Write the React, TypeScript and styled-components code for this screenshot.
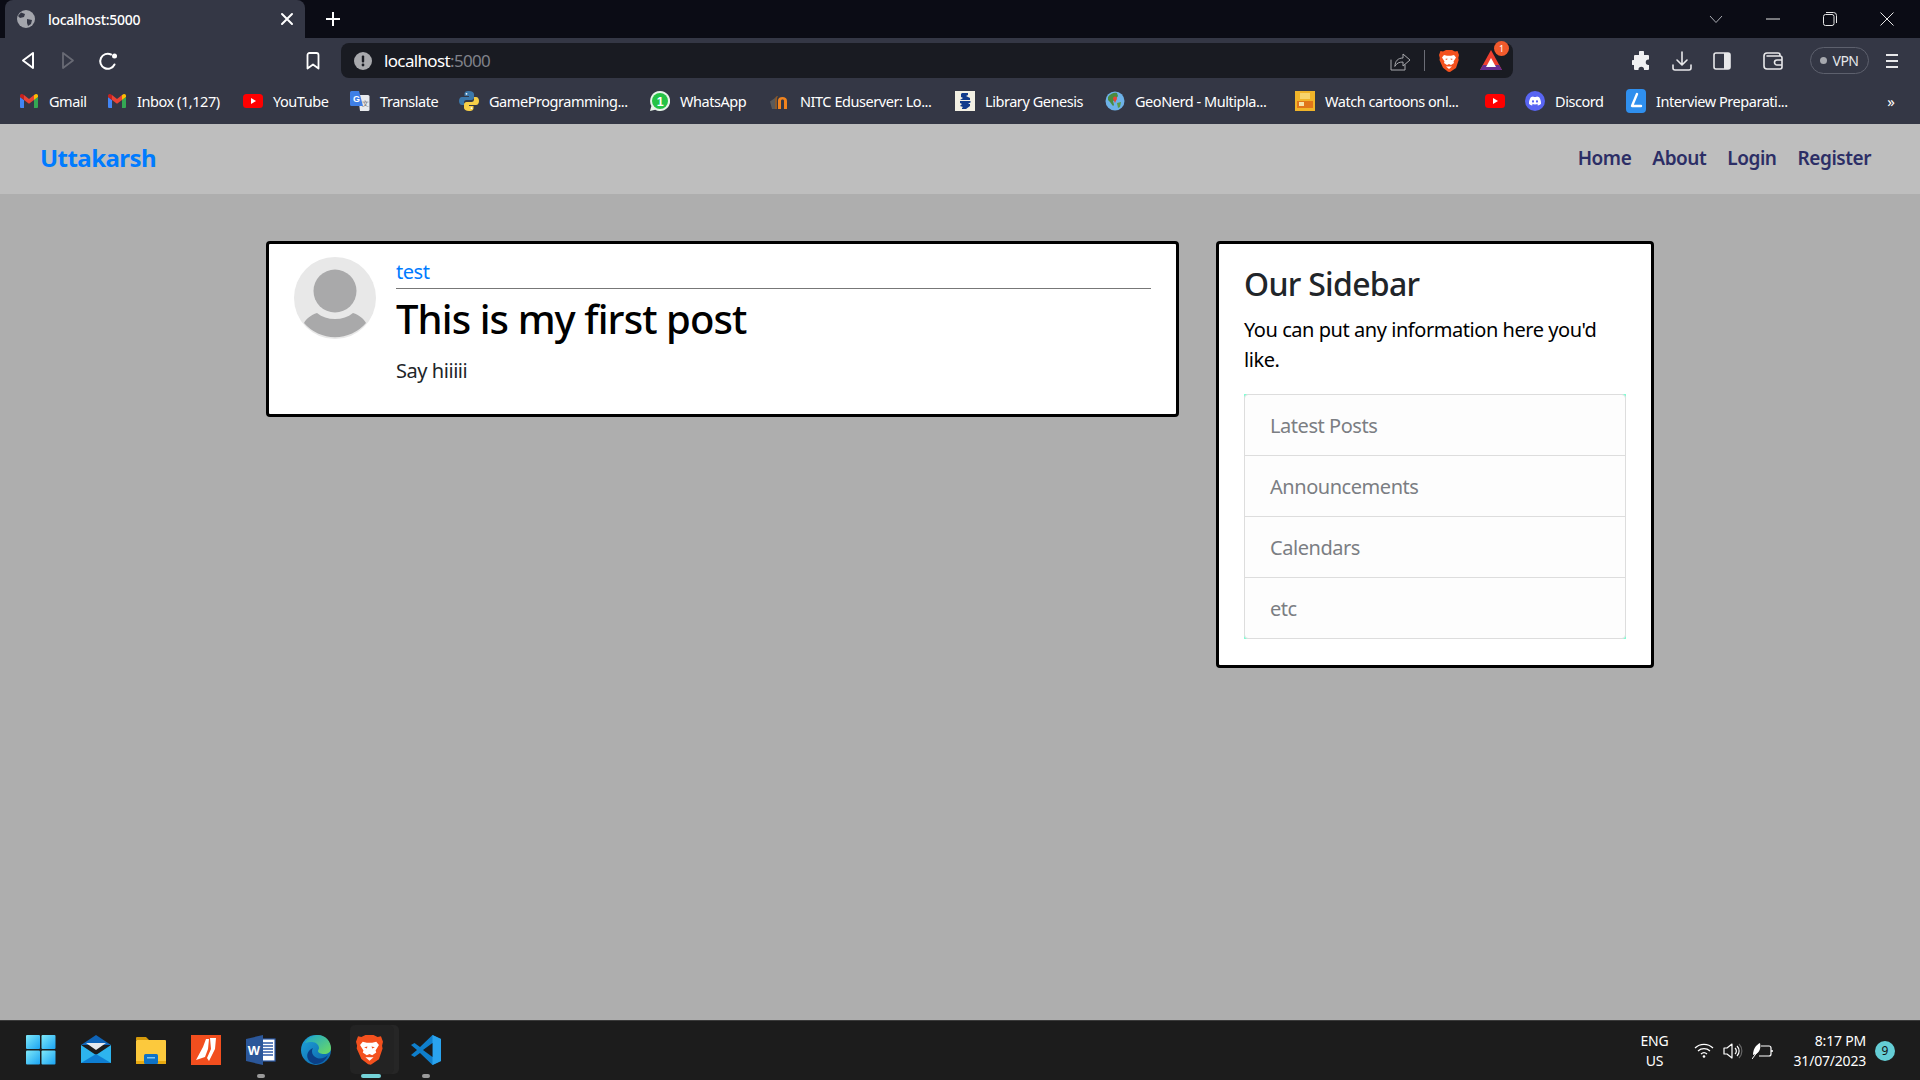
import React from "react";
import styled, { createGlobalStyle } from "styled-components";
import { SiBrave, SiDiscord, SiWhatsapp, SiPython } from "react-icons/si";

const Global = createGlobalStyle`
  html, body { margin: 0; padding: 0; height: 100%; overflow: hidden; }
  body { font-family: "Noto Sans", "Open Sans", sans-serif; background: #aeaeae; }
  * { box-sizing: border-box; }
  svg { display: block; }
`;

const Screen = styled.div`width: 1920px; height: 1080px; display: flex; flex-direction: column; background: #aeaeae;`;

const TabStrip = styled.div`height: 38px; background: #0b0c15; display: flex; align-items: flex-end; padding-left: 5px;`;
const Tab = styled.div`width: 300px; height: 38px; background: #343745; border-radius: 8px 8px 0 0; display: flex; align-items: center; padding: 0 8px 0 12px; color: #fff;`;
const TabTitle = styled.span`flex: 1; margin-left: 13px; font-size: 14px; font-weight: 500; letter-spacing: -0.3px;`;
const NewTab = styled.div`width: 24px; height: 38px; margin-left: 16px; display: flex; align-items: center; justify-content: center;`;
const WindowControls = styled.div`margin-left: auto; height: 38px; display: flex; align-items: center; padding-right: 5px;`;
const WinButton = styled.div`width: 57px; display: flex; justify-content: center;`;

const Toolbar = styled.div`height: 40px; background: #343745; display: grid; grid-template-columns: 341px 1172px 1fr;`;
const NavCluster = styled.div`display: flex; align-items: center; padding: 5px 0 0 8px; height: 40px;`;
const ToolCell = styled.div<{ $w?: number; $ml?: number }>`
  width: ${p => p.$w ?? 40}px; margin-left: ${p => p.$ml ?? 0}px; flex: none;
  display: flex; align-items: center; justify-content: center;
`;
const AddressBar = styled.div`margin-top: 5px; height: 35px; background: #191b22; border-radius: 8px; display: flex; align-items: center; padding: 0 11px 0 12px;`;
const UrlText = styled.span`flex: 1; margin-left: 11px; color: #fff; font-size: 17px; letter-spacing: -0.65px;`;
const UrlPort = styled.span`color: #80828a;`;
const Separator = styled.div`width: 1px; height: 21px; background: #6b6d76; margin: 0 14px;`;
const ExtSlot = styled.div`margin-left: 21px; width: 22px; position: relative;`;
const ExtBadge = styled.span`
  position: absolute; top: -9px; right: -7px; width: 15px; height: 15px; border-radius: 50%;
  background: #f25a2c; color: #fff; font-size: 9px; display: flex; align-items: center; justify-content: center;
`;
const RightCluster = styled.div`display: flex; align-items: center; padding: 5px 0 0 109px; height: 40px;`;
const VpnPill = styled.div`
  margin-left: 17px; width: 59px; height: 27px; border: 1px solid #5d606d; border-radius: 14px; flex: none;
  display: flex; align-items: center; justify-content: center; gap: 5px; color: #e6e7ea; font-size: 14px; letter-spacing: -0.5px;
`;
const VpnDot = styled.span`width: 7px; height: 7px; border-radius: 50%; background: #a6a8ae;`;

const BookmarkBar = styled.div`height: 46px; background: #343745; display: flex; align-items: center; padding-left: 19px;`;
const Bookmark = styled.div<{ $w: number }>`
  width: ${p => p.$w}px; flex: none; display: flex; align-items: center; gap: 10px; color: #fff;
  font-size: 14.5px; letter-spacing: -0.45px; white-space: nowrap;
`;
const BookmarkIcon = styled.span`width: 20px; height: 20px; flex: none; display: flex; align-items: center; justify-content: center;`;
const MoreChevron = styled.span`margin-left: auto; margin-right: 25px; color: #fff; font-size: 15px;`;

const NavBar = styled.nav`height: 70px; background: #bebebe; display: flex; align-items: center; justify-content: space-between; padding: 0 49px 3px 40px;`;
const Brand = styled.a`color: #007bff; font-size: 24px; font-weight: 700; letter-spacing: -0.55px;`;
const NavLinks = styled.div`display: flex; gap: 21px;`;
const NavLink = styled.a`color: #2c2e66; font-size: 19px; font-weight: 600; letter-spacing: -0.45px;`;

const Main = styled.main`flex: 1; display: flex; justify-content: center; align-items: flex-start; gap: 37px; padding-top: 47px;`;
const Panel = styled.section`background: #fff; border: 3px solid #000; border-radius: 4px;`;
const PostCard = styled(Panel)`width: 913px; height: 176px; display: flex; padding: 13px 25px; gap: 20px;`;
const Avatar = styled.div`width: 82px; height: 82px; flex: none;`;
const PostBody = styled.div`flex: 1;`;
const Author = styled.a`display: block; color: #007bff; font-size: 20px; line-height: 30px; height: 32px; letter-spacing: -0.45px; border-bottom: 1px solid #777;`;
const PostTitle = styled.h2`margin: 0; font-size: 40px; line-height: 60px; font-weight: 500; color: #000; letter-spacing: -0.9px;`;
const PostText = styled.p`margin: 7px 0 0; font-size: 20px; line-height: 30px; color: #212529; letter-spacing: -0.45px;`;

const SideCard = styled(Panel)`width: 438px; height: 427px; padding: 16px 25px;`;
const SideTitle = styled.h3`margin: 0; font-size: 32px; line-height: 48px; font-weight: 500; color: #212529; letter-spacing: -0.7px;`;
const SideText = styled.p`margin: 7px 0 0; font-size: 20px; line-height: 30px; color: #000; letter-spacing: -0.45px;`;
const ListOuter = styled.div`margin-top: 19px; background: #7fffd4;`;
const List = styled.ul`list-style: none; margin: 0; padding: 0; border: 1px solid #ddd; border-radius: 4px; background: #fdfdfd; overflow: hidden;`;
const ListItem = styled.li`
  height: 61px; padding-left: 25px; display: flex; align-items: center; color: #7b7e83; font-size: 20px; letter-spacing: -0.45px;
  border-bottom: 1px solid #ddd;
  &:last-child { border-bottom: 0; height: 60px; }
`;

const Taskbar = styled.footer`height: 60px; background: #1c1c1c; border-top: 1px solid #3a3a3a; display: flex; align-items: center; justify-content: space-between; padding: 0 25px 0 13px;`;
const TaskIcons = styled.div`display: flex;`;
const TaskCell = styled.div`width: 55px; height: 59px; position: relative; display: flex; align-items: center; justify-content: center;`;
const ActiveBack = styled.span`position: absolute; left: 7px; top: 4px; width: 44px; height: 49px; background: #232323; border-radius: 5px; box-shadow: 5px 0 0 #262626;`;
const IconWrap = styled.span`position: relative; width: 30px; height: 30px; margin-top: -1px;`;
const RunDot = styled.span<{ $on?: boolean }>`
  position: absolute; bottom: 2px; left: 50%; height: 4px; border-radius: 2px; transform: translateX(-50%);
  width: ${p => (p.$on ? 20 : 8)}px; background: ${p => (p.$on ? "#74d3d8" : "#9a9a9a")};
`;
const Tray = styled.div`display: flex; align-items: center; color: #fff;`;
const Lang = styled.div`text-align: center; font-size: 14px; line-height: 20px; letter-spacing: -0.2px; width: 32px;`;
const TrayIcons = styled.div`display: flex; align-items: center; gap: 9px; margin-left: 23px;`;
const Clock = styled.div`margin-left: 21px; text-align: right; font-size: 14px; line-height: 20px; letter-spacing: -0.2px;`;
const NotifBadge = styled.span`margin-left: 9px; width: 20px; height: 20px; border-radius: 50%; background: #64cdd5; color: #111; font-size: 12px; display: flex; align-items: center; justify-content: center;`;

const stroke = { fill: "none", stroke: "#fff", strokeWidth: 1.6, strokeLinecap: "round" as const, strokeLinejoin: "round" as const };

const GmailIcon = () => (
  <svg width="18" height="14" viewBox="0 0 18 14">
    <path d="M0 3v10a1 1 0 0 0 1 1h3V6z" fill="#4285f4" />
    <path d="M14 6v8h3a1 1 0 0 0 1-1V3z" fill="#34a853" />
    <path d="M4 6 9 9.8 14 6V1L9 5 4 1z" fill="#ea4335" />
    <path d="M0 3 4 6V1L2.6.2C1.4-.4 0 .4 0 1.8z" fill="#c5221f" />
    <path d="M18 3 14 6V1l1.4-.8C16.6-.4 18 .4 18 1.8z" fill="#fbbc04" />
  </svg>
);
const YouTubeIcon = () => (
  <svg width="20" height="14" viewBox="0 0 20 14">
    <rect width="20" height="14" rx="3.5" fill="#f00" />
    <path d="M8 4l5 3-5 3z" fill="#fff" />
  </svg>
);
const TranslateIcon = () => (
  <svg width="20" height="20" viewBox="0 0 20 20">
    <path d="M8 4h10a1.5 1.5 0 0 1 1.5 1.5V18.500a1.500 1.500 0 0 1-1.500 1.500H10z" fill="#e8eaed" />
    <path d="M1.500 0H9l4 15H1.500A1.500 1.500 0 0 1 0 13.500V1.500A1.500 1.500 0 0 1 1.500 0z" fill="#3f7fe6" />
    <text x="3" y="11" fontSize="9" fontWeight="700" fill="#fff" fontFamily="Liberation Sans">G</text>
    <text x="12" y="15" fontSize="7" fill="#666" fontFamily="Noto Sans">文</text>
  </svg>
);
const PythonIcon = () => (
  <svg width="20" height="20" viewBox="0 0 20 20">
    <path d="M10 0C6 0 5.500 1.600 5.500 3v2H10v1H3C1 6 0 7.800 0 10s1 4 3 4h2v-2.500C5 9.800 6.200 9 7.500 9h5c1.300 0 2.500-1 2.500-2.500V3c0-1.500-1.800-3-5-3z" fill="#3c78aa" />
    <path d="M10 20c4 0 4.500-1.600 4.500-3v-2H10v-1h7c2 0 3-1.800 3-4s-1-4-3-4h-2v2.500c0 1.700-1.200 2.500-2.500 2.500h-5C6.200 11 5 12 5 13.500V17c0 1.500 1.800 3 5 3z" fill="#f7cf47" />
    <circle cx="7.500" cy="2.800" r=".9" fill="#fff" />
    <circle cx="12.500" cy="17.200" r=".9" fill="#fff" />
  </svg>
);
const WhatsAppIcon = () => (
  <svg width="20" height="20" viewBox="0 0 20 20">
    <path d="M10 0a10 10 0 0 0-8.600 15L0 20l5.200-1.300A10 10 0 1 0 10 0z" fill="#e8f4ea" />
    <circle cx="10" cy="10" r="8" fill="#25c346" />
    <text x="10" y="14.500" fontSize="12.500" fontWeight="700" fill="#fff" textAnchor="middle" fontFamily="Liberation Sans">1</text>
  </svg>
);
const MoodleIcon = () => (
  <svg width="20" height="16" viewBox="0 0 20 16">
    <path d="M0 8.500 5 5v11H2z" fill="#5a5a5a" />
    <path d="M5 16V7c0-3 1-4 3-4l-1 2v11z" fill="#8a5a2c" />
    <path d="M8 16V7.500C8 5 10 4 12.500 4S17 5 17 8v8h-3V8c0-1-.5-1.500-1.500-1.500S11 7 11 8v8z" fill="#f0831e" />
  </svg>
);
const LibGenIcon = () => (
  <svg width="20" height="20" viewBox="0 0 20 20">
    <rect width="20" height="20" fill="#f2efe3" />
    <path d="M7 2h6v2l-2 1 4 2v2H5l3-2-2-1V3zM5 10h10l1 1-3 2h2v2l-4 3H7v-1l1-1-3-1 2-2-2-1z" fill="#123c8c" />
  </svg>
);
const GeoIcon = () => (
  <svg width="20" height="20" viewBox="0 0 20 20">
    <circle cx="10" cy="10" r="9.500" fill="#6db2e8" />
    <path d="M3 6c2-3 6-5 9-4l1 3-3 4-2 1 1 4-1 1-3-4-2-2z" fill="#4b8b3f" />
    <path d="M12 12l4-1-1 5-2 1z" fill="#5c9a49" />
    <circle cx="10" cy="7.500" r="2" fill="#ea4335" />
    <path d="M8.500 8.500 10 12l1.500-3.500z" fill="#ea4335" />
  </svg>
);
const CartoonIcon = () => (
  <svg width="20" height="20" viewBox="0 0 20 20">
    <rect width="20" height="20" fill="#f0b429" />
    <rect x="2" y="10" width="16" height="7" fill="#e0761a" />
    <rect x="5" y="2" width="10" height="6" fill="#f7d46c" />
    <rect x="4" y="11" width="5" height="4" fill="#f6e3a8" />
  </svg>
);
const DiscordIcon = () => (
  <svg width="20" height="20" viewBox="0 0 20 20">
    <circle cx="10" cy="10" r="10" fill="#5865f2" />
    <g transform="translate(4 4) scale(.5)"><SiDiscord size={24} color="#fff" /></g>
  </svg>
);
const LeetIcon = () => (
  <svg width="20" height="24" viewBox="0 0 20 24">
    <rect width="20" height="24" rx="4" fill="#2f8fee" />
    <path d="M11 5 6 17h9" fill="none" stroke="#fff" strokeWidth="2.400" strokeLinecap="round" strokeLinejoin="round" />
  </svg>
);

const BraveLogo = ({ size }: { size: number }) => (
  <svg width={size} height={size * 1.1} viewBox="0 0 20 22">
    <path d="M4 1.500 7 0h6l3 1.500L18.500 1 20 5l-.7 3 .4 2-2.700 8-6 4-2-.3-5-4L.5 10l.3-2L0 5l1.500-4z" fill="#f4511e" />
    <path d="M5 5l3 .8h4L15 5l2 2.500-2.500 4 .5 1.500-3 2-2-1-2 1-3-2 .5-1.500L3 7.500z" fill="#fff" />
    <path d="M7 16.500h6L10 19z" fill="#fff" />
    <path d="M8 10 6 9l2.500-.5zM12 10l2-1-2.500-.5z" fill="#f4511e" />
  </svg>
);

const Avatar0 = () => (
  <svg width="82" height="82" viewBox="0 0 82 82">
    <circle cx="41" cy="41" r="41" fill="#e8e8e8" />
    <circle cx="41" cy="34" r="21.500" fill="#a9a9aa" />
    <path d="M10 66c2-4 7-8 13-10 5 4 11 6 18 6s13-2 18-6c6 2 11 6 13 10a41 41 0 0 1-62 0z" fill="#a9a9aa" />
  </svg>
);

const bookmarks: [number, React.ReactNode, string][] = [
  [88, <GmailIcon />, "Gmail"],
  [136, <GmailIcon />, "Inbox (1,127)"],
  [107, <YouTubeIcon />, "YouTube"],
  [109, <TranslateIcon />, "Translate"],
  [191, <PythonIcon />, "GameProgramming..."],
  [120, <WhatsAppIcon />, "WhatsApp"],
  [185, <MoodleIcon />, "NITC Eduserver: Lo..."],
  [150, <LibGenIcon />, "Library Genesis"],
  [190, <GeoIcon />, "GeoNerd - Multipla..."],
  [190, <CartoonIcon />, "Watch cartoons onl..."],
  [40, <YouTubeIcon />, ""],
  [101, <DiscordIcon />, "Discord"],
  [190, <LeetIcon />, "Interview Preparati..."],
];

const WindowsLogo = () => (
  <svg width="30" height="30" viewBox="0 0 30 30">
    <defs>
      <linearGradient id="winA" x1="0" y1="0" x2="1" y2="1"><stop offset="0" stopColor="#7fe9f9" /><stop offset="1" stopColor="#1aa3f3" /></linearGradient>
    </defs>
    <rect x="0" y="0" width="14" height="14" rx="1" fill="url(#winA)" />
    <rect x="15.500" y="0" width="14" height="14" rx="1" fill="url(#winA)" />
    <rect x="0" y="15.500" width="14" height="14" rx="1" fill="url(#winA)" />
    <rect x="15.500" y="15.500" width="14" height="14" rx="1" fill="url(#winA)" />
  </svg>
);
const MailLogo = () => (
  <svg width="30" height="30" viewBox="0 0 30 30">
    <path d="M15 0 30 10H0z" fill="#0f64b8" />
    <path d="M5 8h20l-10 7z" fill="#e6e9ee" />
    <path d="M0 10l15 10 15-10v18H0z" fill="#2db4ee" />
    <path d="M0 28 15 19l15 9z" fill="#0e7ed2" />
  </svg>
);
const FolderLogo = () => (
  <svg width="30" height="30" viewBox="0 0 30 30">
    <path d="M0 3a1 1 0 0 1 1-1h9l3 3H0z" fill="#d59a0b" />
    <rect x="0" y="5" width="30" height="24" rx="1" fill="#fcc93d" />
    <path d="M0 26h30v2a1 1 0 0 1-1 1H1a1 1 0 0 1-1-1z" fill="#e8a90f" />
    <rect x="8" y="19" width="14" height="10" rx="1.500" fill="#0e72c6" />
    <rect x="11" y="22" width="8" height="1.500" fill="#7cc6f2" />
  </svg>
);
const AcrobatLogo = () => (
  <svg width="30" height="30" viewBox="0 0 30 30">
    <rect width="30" height="30" fill="#f24e1e" />
    <path d="M15 4 12 12 5 25l9-3 3-8 1-10zM19 3h6l-1 11-6 12-2-3 4-9z" fill="#fff" />
  </svg>
);
const WordLogo = () => (
  <svg width="30" height="30" viewBox="0 0 30 30">
    <rect x="15" y="4" width="14" height="22" fill="#fff" stroke="#2c5aa8" strokeWidth="1.200" />
    <path d="M17 8h10M17 11h10M17 14h10M17 17h10M17 20h10" stroke="#2c5aa8" strokeWidth="1.300" />
    <path d="M0 4 17 0v30L0 26z" fill="#2b579a" />
    <text x="8" y="20" fontSize="13" fontWeight="700" fill="#fff" textAnchor="middle" fontFamily="Liberation Sans">W</text>
  </svg>
);
const EdgeLogo = () => (
  <svg width="30" height="30" viewBox="0 0 30 30">
    <defs>
      <linearGradient id="edgeA" x1="0" y1="0" x2="1" y2="1"><stop offset="0" stopColor="#1fa5d9" /><stop offset="1" stopColor="#0b5ea8" /></linearGradient>
      <linearGradient id="edgeB" x1="0" y1="0" x2="1" y2="1"><stop offset="0" stopColor="#1aa4d0" /><stop offset="1" stopColor="#6fdc5f" /></linearGradient>
    </defs>
    <circle cx="15" cy="15" r="15" fill="url(#edgeA)" />
    <path d="M4 8C7 2 13 0 17 0c8 0 13 7 13 13 0 4-3 6-7 6-3 0-6-1-6-3 0-1 1-2 1-3 0-3-3-6-7-6-3 0-5 .5-7 1z" fill="url(#edgeB)" />
    <path d="M12 13c-2 3-1 8 4 10 4 1.500 8 0 11-3-2 5-7 9-12 9-1 0-2 0-3-.5-5-2-7-7-5-11 1-2 3-4 5-4.500z" fill="#0b3f86" />
  </svg>
);
const VSCodeLogo = () => (
  <svg width="30" height="30" viewBox="0 0 30 30">
    <path d="M21.500 0 30 4v22l-8.500 4L9 18l-5.500 4L0 20l6-5-6-5 3.500-2L9 12z" fill="#0f7fcc" />
    <path d="M21.500 0 30 4v22l-8.500 4z" fill="#2aa3ee" />
    <path d="M21.500 8v14L12 15z" fill="#1c1c1c" />
  </svg>
);

export default function App() {
  return (
    <Screen>
      <Global />
      <TabStrip>
        <Tab>
          <svg width="18" height="18" viewBox="0 0 18 18">
            <circle cx="9" cy="9" r="9" fill="#a4a6ad" />
            <path d="M4 2.500 8 4 7 7 3 8 1 6zM10 9l5 1-1 4-3 2-1-3z" fill="#343745" />
          </svg>
          <TabTitle>localhost:5000</TabTitle>
          <svg width="20" height="20" viewBox="0 0 20 20"><path d="M5 5l10 10M15 5 5 15" {...stroke} strokeWidth={2} /></svg>
        </Tab>
        <NewTab>
          <svg width="16" height="16" viewBox="0 0 16 16"><path d="M8 1v14M1 8h14" fill="none" stroke="#fff" strokeWidth="2" /></svg>
        </NewTab>
        <WindowControls>
          <WinButton><svg width="14" height="9" viewBox="0 0 14 9"><path d="M1 1l6 6.500L13 1" fill="none" stroke="#a9abb2" strokeWidth="1" /></svg></WinButton>
          <WinButton><svg width="14" height="2" viewBox="0 0 14 2"><path d="M0 1h14" stroke="#e5e5e5" strokeWidth="1" /></svg></WinButton>
          <WinButton><svg width="14" height="14" viewBox="0 0 14 14"><rect x=".5" y="2.500" width="10.500" height="11" rx="2" fill="none" stroke="#e5e5e5" /><path d="M3 .5h7.500a3 3 0 0 1 3 3V11" fill="none" stroke="#e5e5e5" /></svg></WinButton>
          <WinButton><svg width="14" height="14" viewBox="0 0 14 14"><path d="M.5.5l13 13M13.500.5l-13 13" stroke="#e5e5e5" strokeWidth="1" /></svg></WinButton>
        </WindowControls>
      </TabStrip>

      <Toolbar>
        <NavCluster>
          <ToolCell><svg width="14" height="19" viewBox="0 0 14 19"><path d="M12 2 2 9.500 12 17z" {...stroke} strokeWidth={2} /></svg></ToolCell>
          <ToolCell><svg width="14" height="19" viewBox="0 0 14 19"><path d="M2 2l10 7.500L2 17z" {...stroke} strokeWidth={1.800} stroke="#686a74" /></svg></ToolCell>
          <ToolCell><svg width="20" height="20" viewBox="0 0 20 20"><path d="M16.500 13.500A7.500 7.500 0 1 1 13 3.500" {...stroke} strokeWidth={2} /><circle cx="16.500" cy="5" r="2.500" fill="#fff" /></svg></ToolCell>
          <ToolCell $w={18} $ml={176}><svg width="14" height="18" viewBox="0 0 14 18"><path d="M1.500 3a2 2 0 0 1 2-2h7a2 2 0 0 1 2 2v13.500L7 12.500l-5.500 4z" {...stroke} strokeWidth={1.800} /></svg></ToolCell>
        </NavCluster>
        <AddressBar>
          <svg width="20" height="20" viewBox="0 0 20 20"><circle cx="10" cy="10" r="9" fill="#a8a9ad" /><rect x="8.800" y="4.500" width="2.400" height="7" rx="1" fill="#191b22" /><circle cx="10" cy="14" r="1.400" fill="#191b22" /></svg>
          <UrlText>localhost<UrlPort>:5000</UrlPort></UrlText>
          <svg width="20" height="20" viewBox="0 0 20 20"><path d="M1 9v10h14v-5" {...stroke} strokeWidth={1} stroke="#a8a9ad" /><path d="M5 15c0-5 3-8 8-8V3l7 6-7 6v-4c-4 0-6 1-8 4z" {...stroke} strokeWidth={1} stroke="#a8a9ad" /></svg>
          <Separator />
          <BraveLogo size={20} />
          <ExtSlot>
            <svg width="22" height="22" viewBox="0 0 22 22">
              <path d="M11 0l11 20H0z" fill="#ef3f2f" />
              <path d="M0 20l3-5h16l3 5z" fill="#662d91" />
              <path d="M11 8l5 9H6z" fill="#fff" />
            </svg>
            <ExtBadge>1</ExtBadge>
          </ExtSlot>
        </AddressBar>
        <RightCluster>
          <ToolCell><svg width="20" height="20" viewBox="0 0 20 20"><path d="M7 1.500a2.500 2.500 0 0 1 5 0V4h4a1 1 0 0 1 1 1v3.500h-.5a2.700 2.700 0 0 0 0 5.500h.5v4a1 1 0 0 1-1 1H12v-.5a2.700 2.700 0 0 0-5.500 0v.5H3a1 1 0 0 1-1-1v-4H1.500a2.500 2.500 0 0 1 0-5H2V5a1 1 0 0 1 1-1h4z" fill="#f0f0f2" /></svg></ToolCell>
          <ToolCell><svg width="20" height="20" viewBox="0 0 20 20"><path d="M10 1v12M5 9l5 5 5-5M1 14v3a2 2 0 0 0 2 2h14a2 2 0 0 0 2-2v-3" {...stroke} stroke="#e8e8ea" /></svg></ToolCell>
          <ToolCell><svg width="18" height="18" viewBox="0 0 18 18"><rect x="1" y="1" width="16" height="16" rx="2" fill="none" stroke="#e8e8ea" strokeWidth="1.600" /><rect x="11" y="1" width="6" height="16" fill="#e8e8ea" /></svg></ToolCell>
          <ToolCell $ml={11}><svg width="20" height="18" viewBox="0 0 20 18"><path d="M17 4V3a2 2 0 0 0-2-2H4a3 3 0 0 0-3 3v10a3 3 0 0 0 3 3h13a2 2 0 0 0 2-2V6a2 2 0 0 0-2-2H4M19 8h-5a2 2 0 0 0 0 5h5" {...stroke} stroke="#e8e8ea" /></svg></ToolCell>
          <VpnPill><VpnDot />VPN</VpnPill>
          <ToolCell $ml={3}><svg width="14" height="16" viewBox="0 0 14 16"><path d="M1 2h12M1 8h12M1 14h12" stroke="#e8e8ea" strokeWidth="1.800" /></svg></ToolCell>
        </RightCluster>
      </Toolbar>

      <BookmarkBar>
        {bookmarks.map(([w, icon, label], i) => (
          <Bookmark key={i} $w={w}>
            <BookmarkIcon>{icon}</BookmarkIcon>
            {label && <span>{label}</span>}
          </Bookmark>
        ))}
        <MoreChevron>»</MoreChevron>
      </BookmarkBar>

      <NavBar>
        <Brand>Uttakarsh</Brand>
        <NavLinks>
          <NavLink>Home</NavLink>
          <NavLink>About</NavLink>
          <NavLink>Login</NavLink>
          <NavLink>Register</NavLink>
        </NavLinks>
      </NavBar>

      <Main>
        <PostCard>
          <Avatar><Avatar0 /></Avatar>
          <PostBody>
            <Author>test</Author>
            <PostTitle>This is my first post</PostTitle>
            <PostText>Say hiiiii</PostText>
          </PostBody>
        </PostCard>
        <SideCard>
          <SideTitle>Our Sidebar</SideTitle>
          <SideText>You can put any information here you'd like.</SideText>
          <ListOuter>
            <List>
              <ListItem>Latest Posts</ListItem>
              <ListItem>Announcements</ListItem>
              <ListItem>Calendars</ListItem>
              <ListItem>etc</ListItem>
            </List>
          </ListOuter>
        </SideCard>
      </Main>

      <Taskbar>
        <TaskIcons>
          <TaskCell><IconWrap><WindowsLogo /></IconWrap></TaskCell>
          <TaskCell><IconWrap><MailLogo /></IconWrap></TaskCell>
          <TaskCell><IconWrap><FolderLogo /></IconWrap></TaskCell>
          <TaskCell><IconWrap><AcrobatLogo /></IconWrap></TaskCell>
          <TaskCell><IconWrap><WordLogo /></IconWrap><RunDot /></TaskCell>
          <TaskCell><IconWrap><EdgeLogo /></IconWrap></TaskCell>
          <TaskCell><ActiveBack /><IconWrap><BraveLogo size={27} /></IconWrap><RunDot $on /></TaskCell>
          <TaskCell><IconWrap><VSCodeLogo /></IconWrap><RunDot /></TaskCell>
        </TaskIcons>
        <Tray>
          <Lang>ENG<br />US</Lang>
          <TrayIcons>
            <svg width="20" height="15" viewBox="0 0 20 15"><path d="M1 5a13 13 0 0 1 18 0M4 8a9 9 0 0 1 12 0M7 11a4.500 4.500 0 0 1 6 0" fill="none" stroke="#fff" strokeWidth="1.300" /><circle cx="10" cy="13.500" r="1.300" fill="#fff" /></svg>
            <svg width="20" height="18" viewBox="0 0 20 18"><path d="M1 6v6h3l5 4V2L4 6z" fill="none" stroke="#fff" strokeWidth="1.200" strokeLinejoin="round" /><path d="M12 6a4 4 0 0 1 0 6M14 4a7 7 0 0 1 0 10" fill="none" stroke="#fff" strokeWidth="1.200" /><path d="M16 2a10 10 0 0 1 0 14" fill="none" stroke="#666" strokeWidth="1.200" /></svg>
            <svg width="21" height="18" viewBox="0 0 21 18"><path d="M9 4h8a2 2 0 0 1 2 2v6a2 2 0 0 1-2 2H7" fill="none" stroke="#fff" strokeWidth="1.200" /><path d="M20 8v2" stroke="#fff" strokeWidth="1.500" /><path d="M1 13C1 7 4 3 8 1c1 4 0 9-4 11z" fill="#fff" /><path d="M0 17 6 9" stroke="#fff" /></svg>
          </TrayIcons>
          <Clock>8:17 PM<br />31/07/2023</Clock>
          <NotifBadge>9</NotifBadge>
        </Tray>
      </Taskbar>
    </Screen>
  );
}
